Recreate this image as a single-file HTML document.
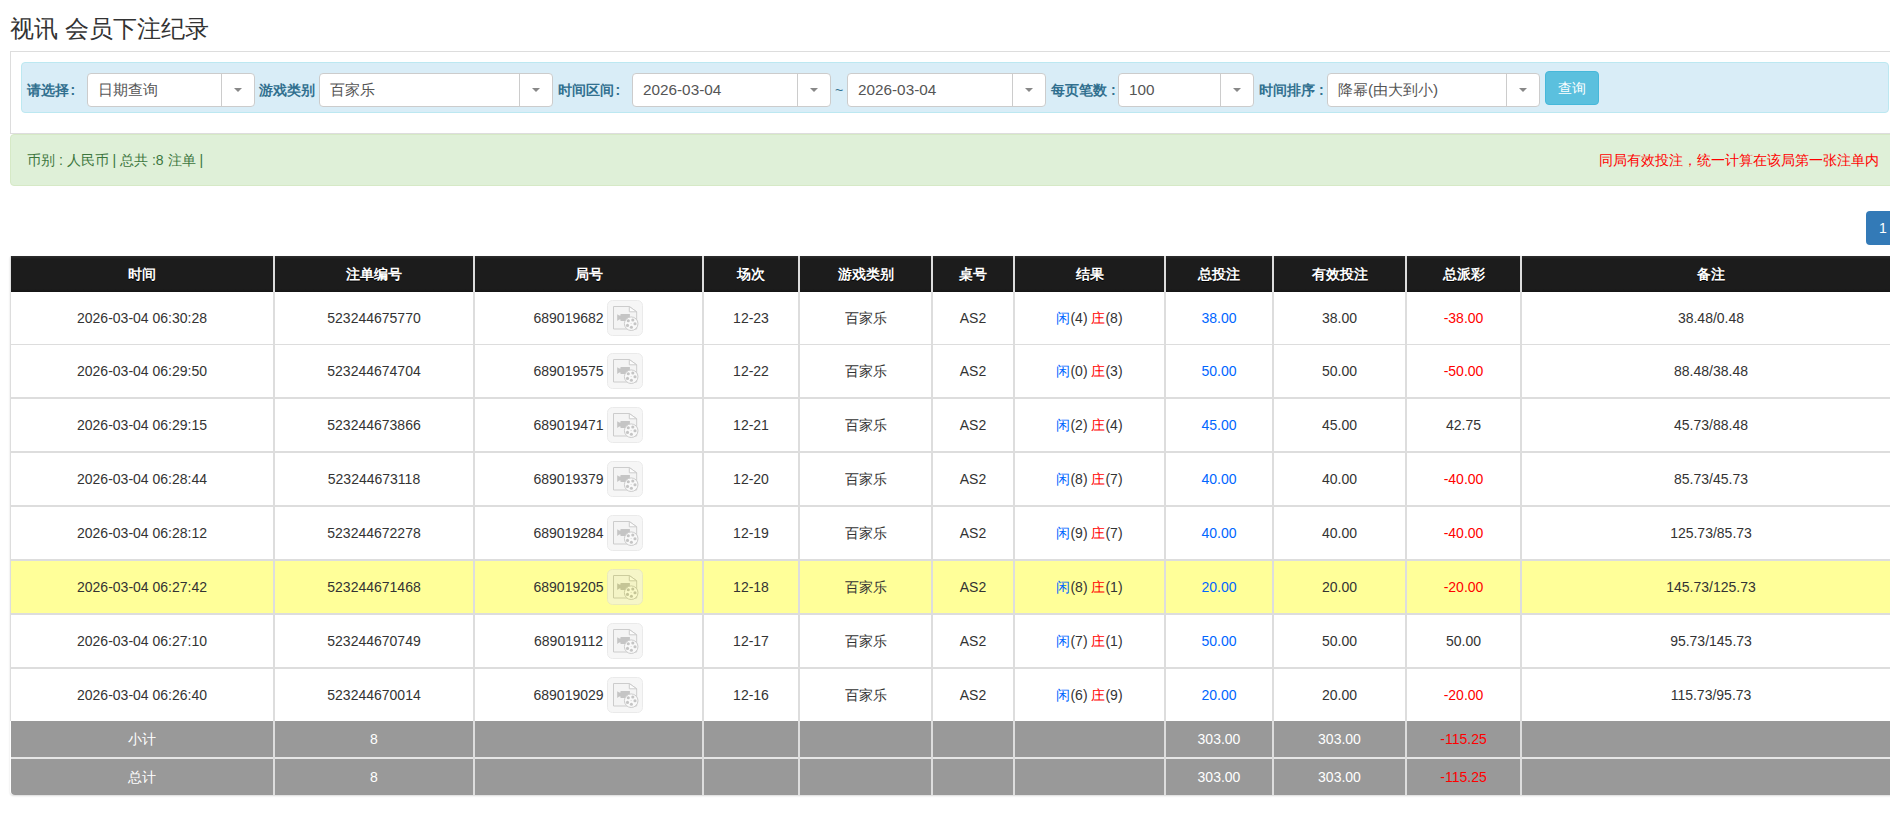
<!DOCTYPE html>
<html><head><meta charset="utf-8"><title>视讯 会员下注纪录</title>
<style>
*{box-sizing:border-box}
html,body{margin:0;padding:0;overflow:hidden;background:#fff;}
body{width:1890px;height:820px;position:relative;font-family:"Liberation Sans",sans-serif;font-size:14px;color:#333;}
.abs{position:absolute}
.title{position:absolute;left:10px;top:12px;font-size:24px;line-height:34px;color:#333;white-space:nowrap}
.outer{position:absolute;left:10px;top:51px;width:1890px;height:83px;border:1px solid #dddddd;border-right:none;background:#fff}
.info{position:absolute;left:21px;top:62px;width:1868px;height:51px;border:1px solid #bce8f1;background:#d9edf7;border-radius:4px}
.lbl{position:absolute;top:80px;height:20px;line-height:20px;font-size:14px;font-weight:bold;color:#31708f;white-space:nowrap}
.sel{position:absolute;top:73px;height:34px;border:1px solid #cccccc;border-radius:4px;background:#fff}
.st{position:absolute;left:10px;top:6px;line-height:20px;font-size:15.3px;color:#555;white-space:nowrap}
.dv{position:absolute;right:32px;top:0;width:1px;height:32px;background:#cccccc}
.ar{position:absolute;right:12px;top:14px;width:0;height:0;border-left:4px solid transparent;border-right:4px solid transparent;border-top:4px solid #888}
.btn{position:absolute;left:1545px;top:71px;width:54px;height:34px;border:1px solid #46b8da;background:#5bc0de;border-radius:4px;color:#fff;text-align:center;line-height:32px;font-size:14px}
.succ{position:absolute;left:10px;top:134px;width:1900px;height:52px;border:1px solid #d6e9c6;background:#dff0d8;border-radius:4px}
.succ .l{position:absolute;left:16px;top:15px;line-height:20px;color:#3c763d;white-space:nowrap}
.succ .r{position:absolute;left:1588px;top:15px;line-height:20px;color:#ff0000;white-space:nowrap}
.page1{position:absolute;left:1866px;top:211px;width:60px;height:34px;background:#337ab7;border-radius:4px 0 0 4px;color:#fff;line-height:34px;font-size:14px}
.page1 span{position:absolute;left:13px;top:0}
.hdr{position:absolute;background:linear-gradient(#2e2e2e 0px,#1c1c1c 3px,#1c1c1c 33px,#141414 36px)}
.c{position:absolute;text-align:center;white-space:nowrap;font-size:14px}
.ib{display:inline-block;width:36px;height:36px;vertical-align:middle;position:relative;top:-1px}
.ib svg{display:block}
.shadow{position:absolute;left:10px;top:256px;width:1890px;height:539px;border-radius:0 0 4px 4px;box-shadow:0 1px 2px rgba(0,0,0,0.15)}
</style></head><body>
<div class="title">视讯 会员下注纪录</div>
<div class="outer"></div>
<div class="info"></div>
<div class="lbl" style="left:27px">请选择<span style="margin-left:1.5px">:</span></div>
<div class="sel" style="left:87px;width:168px"><span class="st">日期查询</span><div class="dv"></div><div class="ar"></div></div>
<div class="lbl" style="left:259px">游戏类别</div>
<div class="sel" style="left:319px;width:234px"><span class="st">百家乐</span><div class="dv"></div><div class="ar"></div></div>
<div class="lbl" style="left:558px">时间区间<span style="margin-left:1.5px">:</span></div>
<div class="sel" style="left:632px;width:199px"><span class="st">2026-03-04</span><div class="dv"></div><div class="ar"></div></div>
<div class="lbl" style="left:835px;font-weight:normal">~</div>
<div class="sel" style="left:847px;width:199px"><span class="st">2026-03-04</span><div class="dv"></div><div class="ar"></div></div>
<div class="lbl" style="left:1051px">每页笔数 :</div>
<div class="sel" style="left:1118px;width:136px"><span class="st">100</span><div class="dv"></div><div class="ar"></div></div>
<div class="lbl" style="left:1259px">时间排序 :</div>
<div class="sel" style="left:1327px;width:213px"><span class="st">降幂(由大到小)</span><div class="dv"></div><div class="ar"></div></div>
<div class="btn">查询</div>
<div class="succ"><span class="l">币别 : 人民币 | 总共 :8 注单 |</span><span class="r">同局有效投注，统一计算在该局第一张注单内</span></div>
<div class="page1"><span>1</span></div>
<div class="shadow"></div>
<div class="hdr" style="left:11px;top:256px;width:1889px;height:36px"></div>
<div style="position:absolute;left:10px;top:256px;width:1px;height:36px;background:#e2e2e2"></div>
<div class="c" style="left:11px;width:262px;top:256px;height:36px;line-height:36px;color:#fff;font-weight:bold;text-shadow:0 1px 0 #000">时间</div>
<div class="c" style="left:275px;width:198px;top:256px;height:36px;line-height:36px;color:#fff;font-weight:bold;text-shadow:0 1px 0 #000">注单编号</div>
<div class="c" style="left:475px;width:227px;top:256px;height:36px;line-height:36px;color:#fff;font-weight:bold;text-shadow:0 1px 0 #000">局号</div>
<div class="c" style="left:704px;width:94px;top:256px;height:36px;line-height:36px;color:#fff;font-weight:bold;text-shadow:0 1px 0 #000">场次</div>
<div class="c" style="left:800px;width:131px;top:256px;height:36px;line-height:36px;color:#fff;font-weight:bold;text-shadow:0 1px 0 #000">游戏类别</div>
<div class="c" style="left:933px;width:80px;top:256px;height:36px;line-height:36px;color:#fff;font-weight:bold;text-shadow:0 1px 0 #000">桌号</div>
<div class="c" style="left:1015px;width:149px;top:256px;height:36px;line-height:36px;color:#fff;font-weight:bold;text-shadow:0 1px 0 #000">结果</div>
<div class="c" style="left:1166px;width:106px;top:256px;height:36px;line-height:36px;color:#fff;font-weight:bold;text-shadow:0 1px 0 #000">总投注</div>
<div class="c" style="left:1274px;width:131px;top:256px;height:36px;line-height:36px;color:#fff;font-weight:bold;text-shadow:0 1px 0 #000">有效投注</div>
<div class="c" style="left:1407px;width:113px;top:256px;height:36px;line-height:36px;color:#fff;font-weight:bold;text-shadow:0 1px 0 #000">总派彩</div>
<div class="c" style="left:1522px;width:378px;top:256px;height:36px;line-height:36px;color:#fff;font-weight:bold;text-shadow:0 1px 0 #000">备注</div>
<div style="position:absolute;left:11px;top:292px;width:1889px;height:52px;background:#fff"></div>
<div class="c" style="left:11px;width:262px;top:292px;height:52px;line-height:52px;">2026-03-04 06:30:28</div>
<div class="c" style="left:275px;width:198px;top:292px;height:52px;line-height:52px;">523244675770</div>
<div class="c" style="left:475px;width:227px;top:292px;height:52px;line-height:52px;">689019682 <span class="ib"><svg width="36" height="36" viewBox="0 0 36 36" style="opacity:0.54"><rect x="0.5" y="0.5" width="35" height="35" rx="5" ry="5" fill="#f0f0f0" stroke="#dadada"/>
<path d="M6.5 6.5 H22.3 L29.7 11.8 V29 H6.5 Z" fill="#ececec" stroke="#a2a2a2" stroke-width="1"/>
<path d="M22.3 6.5 V11.8 H29.7 Z" fill="#fbfbfb" stroke="#a2a2a2" stroke-width="1" stroke-linejoin="round"/>
<path d="M10.2 14.2 L12.2 15.6 L13.5 15.6 V14.1 H22.9 V21.1 H13.5 V19.6 L12.2 19.6 L10.2 21.1 Z" fill="#959595"/>
<circle cx="24.2" cy="23.7" r="6.8" fill="#f4f4f4" stroke="#a2a2a2" stroke-width="1"/>
<circle cx="21.3" cy="20.8" r="1.55" fill="#959595"/><circle cx="25.8" cy="20.0" r="1.55" fill="#959595"/>
<circle cx="28.0" cy="23.8" r="1.55" fill="#959595"/><circle cx="24.4" cy="27.2" r="1.55" fill="#959595"/>
<circle cx="20.5" cy="25.4" r="1.55" fill="#959595"/><circle cx="24.1" cy="23.5" r="0.6" fill="#b7b7b7"/>
</svg></span></div>
<div class="c" style="left:704px;width:94px;top:292px;height:52px;line-height:52px;">12-23</div>
<div class="c" style="left:800px;width:131px;top:292px;height:52px;line-height:52px;">百家乐</div>
<div class="c" style="left:933px;width:80px;top:292px;height:52px;line-height:52px;">AS2</div>
<div class="c" style="left:1015px;width:149px;top:292px;height:52px;line-height:52px;"><span style="color:#0066ff">闲</span>(4) <span style="color:#ff0000">庄</span>(8)</div>
<div class="c" style="left:1166px;width:106px;top:292px;height:52px;line-height:52px;"><span style="color:#0066ff">38.00</span></div>
<div class="c" style="left:1274px;width:131px;top:292px;height:52px;line-height:52px;">38.00</div>
<div class="c" style="left:1407px;width:113px;top:292px;height:52px;line-height:52px;"><span style="color:#ff0000">-38.00</span></div>
<div class="c" style="left:1522px;width:378px;top:292px;height:52px;line-height:52px;">38.48/0.48</div>
<div style="position:absolute;left:11px;top:345px;width:1889px;height:52px;background:#fff"></div>
<div class="c" style="left:11px;width:262px;top:345px;height:52px;line-height:52px;">2026-03-04 06:29:50</div>
<div class="c" style="left:275px;width:198px;top:345px;height:52px;line-height:52px;">523244674704</div>
<div class="c" style="left:475px;width:227px;top:345px;height:52px;line-height:52px;">689019575 <span class="ib"><svg width="36" height="36" viewBox="0 0 36 36" style="opacity:0.54"><rect x="0.5" y="0.5" width="35" height="35" rx="5" ry="5" fill="#f0f0f0" stroke="#dadada"/>
<path d="M6.5 6.5 H22.3 L29.7 11.8 V29 H6.5 Z" fill="#ececec" stroke="#a2a2a2" stroke-width="1"/>
<path d="M22.3 6.5 V11.8 H29.7 Z" fill="#fbfbfb" stroke="#a2a2a2" stroke-width="1" stroke-linejoin="round"/>
<path d="M10.2 14.2 L12.2 15.6 L13.5 15.6 V14.1 H22.9 V21.1 H13.5 V19.6 L12.2 19.6 L10.2 21.1 Z" fill="#959595"/>
<circle cx="24.2" cy="23.7" r="6.8" fill="#f4f4f4" stroke="#a2a2a2" stroke-width="1"/>
<circle cx="21.3" cy="20.8" r="1.55" fill="#959595"/><circle cx="25.8" cy="20.0" r="1.55" fill="#959595"/>
<circle cx="28.0" cy="23.8" r="1.55" fill="#959595"/><circle cx="24.4" cy="27.2" r="1.55" fill="#959595"/>
<circle cx="20.5" cy="25.4" r="1.55" fill="#959595"/><circle cx="24.1" cy="23.5" r="0.6" fill="#b7b7b7"/>
</svg></span></div>
<div class="c" style="left:704px;width:94px;top:345px;height:52px;line-height:52px;">12-22</div>
<div class="c" style="left:800px;width:131px;top:345px;height:52px;line-height:52px;">百家乐</div>
<div class="c" style="left:933px;width:80px;top:345px;height:52px;line-height:52px;">AS2</div>
<div class="c" style="left:1015px;width:149px;top:345px;height:52px;line-height:52px;"><span style="color:#0066ff">闲</span>(0) <span style="color:#ff0000">庄</span>(3)</div>
<div class="c" style="left:1166px;width:106px;top:345px;height:52px;line-height:52px;"><span style="color:#0066ff">50.00</span></div>
<div class="c" style="left:1274px;width:131px;top:345px;height:52px;line-height:52px;">50.00</div>
<div class="c" style="left:1407px;width:113px;top:345px;height:52px;line-height:52px;"><span style="color:#ff0000">-50.00</span></div>
<div class="c" style="left:1522px;width:378px;top:345px;height:52px;line-height:52px;">88.48/38.48</div>
<div style="position:absolute;left:11px;top:399px;width:1889px;height:52px;background:#fff"></div>
<div class="c" style="left:11px;width:262px;top:399px;height:52px;line-height:52px;">2026-03-04 06:29:15</div>
<div class="c" style="left:275px;width:198px;top:399px;height:52px;line-height:52px;">523244673866</div>
<div class="c" style="left:475px;width:227px;top:399px;height:52px;line-height:52px;">689019471 <span class="ib"><svg width="36" height="36" viewBox="0 0 36 36" style="opacity:0.54"><rect x="0.5" y="0.5" width="35" height="35" rx="5" ry="5" fill="#f0f0f0" stroke="#dadada"/>
<path d="M6.5 6.5 H22.3 L29.7 11.8 V29 H6.5 Z" fill="#ececec" stroke="#a2a2a2" stroke-width="1"/>
<path d="M22.3 6.5 V11.8 H29.7 Z" fill="#fbfbfb" stroke="#a2a2a2" stroke-width="1" stroke-linejoin="round"/>
<path d="M10.2 14.2 L12.2 15.6 L13.5 15.6 V14.1 H22.9 V21.1 H13.5 V19.6 L12.2 19.6 L10.2 21.1 Z" fill="#959595"/>
<circle cx="24.2" cy="23.7" r="6.8" fill="#f4f4f4" stroke="#a2a2a2" stroke-width="1"/>
<circle cx="21.3" cy="20.8" r="1.55" fill="#959595"/><circle cx="25.8" cy="20.0" r="1.55" fill="#959595"/>
<circle cx="28.0" cy="23.8" r="1.55" fill="#959595"/><circle cx="24.4" cy="27.2" r="1.55" fill="#959595"/>
<circle cx="20.5" cy="25.4" r="1.55" fill="#959595"/><circle cx="24.1" cy="23.5" r="0.6" fill="#b7b7b7"/>
</svg></span></div>
<div class="c" style="left:704px;width:94px;top:399px;height:52px;line-height:52px;">12-21</div>
<div class="c" style="left:800px;width:131px;top:399px;height:52px;line-height:52px;">百家乐</div>
<div class="c" style="left:933px;width:80px;top:399px;height:52px;line-height:52px;">AS2</div>
<div class="c" style="left:1015px;width:149px;top:399px;height:52px;line-height:52px;"><span style="color:#0066ff">闲</span>(2) <span style="color:#ff0000">庄</span>(4)</div>
<div class="c" style="left:1166px;width:106px;top:399px;height:52px;line-height:52px;"><span style="color:#0066ff">45.00</span></div>
<div class="c" style="left:1274px;width:131px;top:399px;height:52px;line-height:52px;">45.00</div>
<div class="c" style="left:1407px;width:113px;top:399px;height:52px;line-height:52px;">42.75</div>
<div class="c" style="left:1522px;width:378px;top:399px;height:52px;line-height:52px;">45.73/88.48</div>
<div style="position:absolute;left:11px;top:453px;width:1889px;height:52px;background:#fff"></div>
<div class="c" style="left:11px;width:262px;top:453px;height:52px;line-height:52px;">2026-03-04 06:28:44</div>
<div class="c" style="left:275px;width:198px;top:453px;height:52px;line-height:52px;">523244673118</div>
<div class="c" style="left:475px;width:227px;top:453px;height:52px;line-height:52px;">689019379 <span class="ib"><svg width="36" height="36" viewBox="0 0 36 36" style="opacity:0.54"><rect x="0.5" y="0.5" width="35" height="35" rx="5" ry="5" fill="#f0f0f0" stroke="#dadada"/>
<path d="M6.5 6.5 H22.3 L29.7 11.8 V29 H6.5 Z" fill="#ececec" stroke="#a2a2a2" stroke-width="1"/>
<path d="M22.3 6.5 V11.8 H29.7 Z" fill="#fbfbfb" stroke="#a2a2a2" stroke-width="1" stroke-linejoin="round"/>
<path d="M10.2 14.2 L12.2 15.6 L13.5 15.6 V14.1 H22.9 V21.1 H13.5 V19.6 L12.2 19.6 L10.2 21.1 Z" fill="#959595"/>
<circle cx="24.2" cy="23.7" r="6.8" fill="#f4f4f4" stroke="#a2a2a2" stroke-width="1"/>
<circle cx="21.3" cy="20.8" r="1.55" fill="#959595"/><circle cx="25.8" cy="20.0" r="1.55" fill="#959595"/>
<circle cx="28.0" cy="23.8" r="1.55" fill="#959595"/><circle cx="24.4" cy="27.2" r="1.55" fill="#959595"/>
<circle cx="20.5" cy="25.4" r="1.55" fill="#959595"/><circle cx="24.1" cy="23.5" r="0.6" fill="#b7b7b7"/>
</svg></span></div>
<div class="c" style="left:704px;width:94px;top:453px;height:52px;line-height:52px;">12-20</div>
<div class="c" style="left:800px;width:131px;top:453px;height:52px;line-height:52px;">百家乐</div>
<div class="c" style="left:933px;width:80px;top:453px;height:52px;line-height:52px;">AS2</div>
<div class="c" style="left:1015px;width:149px;top:453px;height:52px;line-height:52px;"><span style="color:#0066ff">闲</span>(8) <span style="color:#ff0000">庄</span>(7)</div>
<div class="c" style="left:1166px;width:106px;top:453px;height:52px;line-height:52px;"><span style="color:#0066ff">40.00</span></div>
<div class="c" style="left:1274px;width:131px;top:453px;height:52px;line-height:52px;">40.00</div>
<div class="c" style="left:1407px;width:113px;top:453px;height:52px;line-height:52px;"><span style="color:#ff0000">-40.00</span></div>
<div class="c" style="left:1522px;width:378px;top:453px;height:52px;line-height:52px;">85.73/45.73</div>
<div style="position:absolute;left:11px;top:507px;width:1889px;height:52px;background:#fff"></div>
<div class="c" style="left:11px;width:262px;top:507px;height:52px;line-height:52px;">2026-03-04 06:28:12</div>
<div class="c" style="left:275px;width:198px;top:507px;height:52px;line-height:52px;">523244672278</div>
<div class="c" style="left:475px;width:227px;top:507px;height:52px;line-height:52px;">689019284 <span class="ib"><svg width="36" height="36" viewBox="0 0 36 36" style="opacity:0.54"><rect x="0.5" y="0.5" width="35" height="35" rx="5" ry="5" fill="#f0f0f0" stroke="#dadada"/>
<path d="M6.5 6.5 H22.3 L29.7 11.8 V29 H6.5 Z" fill="#ececec" stroke="#a2a2a2" stroke-width="1"/>
<path d="M22.3 6.5 V11.8 H29.7 Z" fill="#fbfbfb" stroke="#a2a2a2" stroke-width="1" stroke-linejoin="round"/>
<path d="M10.2 14.2 L12.2 15.6 L13.5 15.6 V14.1 H22.9 V21.1 H13.5 V19.6 L12.2 19.6 L10.2 21.1 Z" fill="#959595"/>
<circle cx="24.2" cy="23.7" r="6.8" fill="#f4f4f4" stroke="#a2a2a2" stroke-width="1"/>
<circle cx="21.3" cy="20.8" r="1.55" fill="#959595"/><circle cx="25.8" cy="20.0" r="1.55" fill="#959595"/>
<circle cx="28.0" cy="23.8" r="1.55" fill="#959595"/><circle cx="24.4" cy="27.2" r="1.55" fill="#959595"/>
<circle cx="20.5" cy="25.4" r="1.55" fill="#959595"/><circle cx="24.1" cy="23.5" r="0.6" fill="#b7b7b7"/>
</svg></span></div>
<div class="c" style="left:704px;width:94px;top:507px;height:52px;line-height:52px;">12-19</div>
<div class="c" style="left:800px;width:131px;top:507px;height:52px;line-height:52px;">百家乐</div>
<div class="c" style="left:933px;width:80px;top:507px;height:52px;line-height:52px;">AS2</div>
<div class="c" style="left:1015px;width:149px;top:507px;height:52px;line-height:52px;"><span style="color:#0066ff">闲</span>(9) <span style="color:#ff0000">庄</span>(7)</div>
<div class="c" style="left:1166px;width:106px;top:507px;height:52px;line-height:52px;"><span style="color:#0066ff">40.00</span></div>
<div class="c" style="left:1274px;width:131px;top:507px;height:52px;line-height:52px;">40.00</div>
<div class="c" style="left:1407px;width:113px;top:507px;height:52px;line-height:52px;"><span style="color:#ff0000">-40.00</span></div>
<div class="c" style="left:1522px;width:378px;top:507px;height:52px;line-height:52px;">125.73/85.73</div>
<div style="position:absolute;left:11px;top:561px;width:1889px;height:52px;background:#ffff99"></div>
<div class="c" style="left:11px;width:262px;top:561px;height:52px;line-height:52px;">2026-03-04 06:27:42</div>
<div class="c" style="left:275px;width:198px;top:561px;height:52px;line-height:52px;">523244671468</div>
<div class="c" style="left:475px;width:227px;top:561px;height:52px;line-height:52px;">689019205 <span class="ib"><svg width="36" height="36" viewBox="0 0 36 36" style="opacity:0.54"><rect x="0.5" y="0.5" width="35" height="35" rx="5" ry="5" fill="#f0f0f0" stroke="#dadada"/>
<path d="M6.5 6.5 H22.3 L29.7 11.8 V29 H6.5 Z" fill="#ececec" stroke="#a2a2a2" stroke-width="1"/>
<path d="M22.3 6.5 V11.8 H29.7 Z" fill="#fbfbfb" stroke="#a2a2a2" stroke-width="1" stroke-linejoin="round"/>
<path d="M10.2 14.2 L12.2 15.6 L13.5 15.6 V14.1 H22.9 V21.1 H13.5 V19.6 L12.2 19.6 L10.2 21.1 Z" fill="#959595"/>
<circle cx="24.2" cy="23.7" r="6.8" fill="#f4f4f4" stroke="#a2a2a2" stroke-width="1"/>
<circle cx="21.3" cy="20.8" r="1.55" fill="#959595"/><circle cx="25.8" cy="20.0" r="1.55" fill="#959595"/>
<circle cx="28.0" cy="23.8" r="1.55" fill="#959595"/><circle cx="24.4" cy="27.2" r="1.55" fill="#959595"/>
<circle cx="20.5" cy="25.4" r="1.55" fill="#959595"/><circle cx="24.1" cy="23.5" r="0.6" fill="#b7b7b7"/>
</svg></span></div>
<div class="c" style="left:704px;width:94px;top:561px;height:52px;line-height:52px;">12-18</div>
<div class="c" style="left:800px;width:131px;top:561px;height:52px;line-height:52px;">百家乐</div>
<div class="c" style="left:933px;width:80px;top:561px;height:52px;line-height:52px;">AS2</div>
<div class="c" style="left:1015px;width:149px;top:561px;height:52px;line-height:52px;"><span style="color:#0066ff">闲</span>(8) <span style="color:#ff0000">庄</span>(1)</div>
<div class="c" style="left:1166px;width:106px;top:561px;height:52px;line-height:52px;"><span style="color:#0066ff">20.00</span></div>
<div class="c" style="left:1274px;width:131px;top:561px;height:52px;line-height:52px;">20.00</div>
<div class="c" style="left:1407px;width:113px;top:561px;height:52px;line-height:52px;"><span style="color:#ff0000">-20.00</span></div>
<div class="c" style="left:1522px;width:378px;top:561px;height:52px;line-height:52px;">145.73/125.73</div>
<div style="position:absolute;left:11px;top:615px;width:1889px;height:52px;background:#fff"></div>
<div class="c" style="left:11px;width:262px;top:615px;height:52px;line-height:52px;">2026-03-04 06:27:10</div>
<div class="c" style="left:275px;width:198px;top:615px;height:52px;line-height:52px;">523244670749</div>
<div class="c" style="left:475px;width:227px;top:615px;height:52px;line-height:52px;">689019112 <span class="ib"><svg width="36" height="36" viewBox="0 0 36 36" style="opacity:0.54"><rect x="0.5" y="0.5" width="35" height="35" rx="5" ry="5" fill="#f0f0f0" stroke="#dadada"/>
<path d="M6.5 6.5 H22.3 L29.7 11.8 V29 H6.5 Z" fill="#ececec" stroke="#a2a2a2" stroke-width="1"/>
<path d="M22.3 6.5 V11.8 H29.7 Z" fill="#fbfbfb" stroke="#a2a2a2" stroke-width="1" stroke-linejoin="round"/>
<path d="M10.2 14.2 L12.2 15.6 L13.5 15.6 V14.1 H22.9 V21.1 H13.5 V19.6 L12.2 19.6 L10.2 21.1 Z" fill="#959595"/>
<circle cx="24.2" cy="23.7" r="6.8" fill="#f4f4f4" stroke="#a2a2a2" stroke-width="1"/>
<circle cx="21.3" cy="20.8" r="1.55" fill="#959595"/><circle cx="25.8" cy="20.0" r="1.55" fill="#959595"/>
<circle cx="28.0" cy="23.8" r="1.55" fill="#959595"/><circle cx="24.4" cy="27.2" r="1.55" fill="#959595"/>
<circle cx="20.5" cy="25.4" r="1.55" fill="#959595"/><circle cx="24.1" cy="23.5" r="0.6" fill="#b7b7b7"/>
</svg></span></div>
<div class="c" style="left:704px;width:94px;top:615px;height:52px;line-height:52px;">12-17</div>
<div class="c" style="left:800px;width:131px;top:615px;height:52px;line-height:52px;">百家乐</div>
<div class="c" style="left:933px;width:80px;top:615px;height:52px;line-height:52px;">AS2</div>
<div class="c" style="left:1015px;width:149px;top:615px;height:52px;line-height:52px;"><span style="color:#0066ff">闲</span>(7) <span style="color:#ff0000">庄</span>(1)</div>
<div class="c" style="left:1166px;width:106px;top:615px;height:52px;line-height:52px;"><span style="color:#0066ff">50.00</span></div>
<div class="c" style="left:1274px;width:131px;top:615px;height:52px;line-height:52px;">50.00</div>
<div class="c" style="left:1407px;width:113px;top:615px;height:52px;line-height:52px;">50.00</div>
<div class="c" style="left:1522px;width:378px;top:615px;height:52px;line-height:52px;">95.73/145.73</div>
<div style="position:absolute;left:11px;top:669px;width:1889px;height:52px;background:#fff"></div>
<div class="c" style="left:11px;width:262px;top:669px;height:52px;line-height:52px;">2026-03-04 06:26:40</div>
<div class="c" style="left:275px;width:198px;top:669px;height:52px;line-height:52px;">523244670014</div>
<div class="c" style="left:475px;width:227px;top:669px;height:52px;line-height:52px;">689019029 <span class="ib"><svg width="36" height="36" viewBox="0 0 36 36" style="opacity:0.54"><rect x="0.5" y="0.5" width="35" height="35" rx="5" ry="5" fill="#f0f0f0" stroke="#dadada"/>
<path d="M6.5 6.5 H22.3 L29.7 11.8 V29 H6.5 Z" fill="#ececec" stroke="#a2a2a2" stroke-width="1"/>
<path d="M22.3 6.5 V11.8 H29.7 Z" fill="#fbfbfb" stroke="#a2a2a2" stroke-width="1" stroke-linejoin="round"/>
<path d="M10.2 14.2 L12.2 15.6 L13.5 15.6 V14.1 H22.9 V21.1 H13.5 V19.6 L12.2 19.6 L10.2 21.1 Z" fill="#959595"/>
<circle cx="24.2" cy="23.7" r="6.8" fill="#f4f4f4" stroke="#a2a2a2" stroke-width="1"/>
<circle cx="21.3" cy="20.8" r="1.55" fill="#959595"/><circle cx="25.8" cy="20.0" r="1.55" fill="#959595"/>
<circle cx="28.0" cy="23.8" r="1.55" fill="#959595"/><circle cx="24.4" cy="27.2" r="1.55" fill="#959595"/>
<circle cx="20.5" cy="25.4" r="1.55" fill="#959595"/><circle cx="24.1" cy="23.5" r="0.6" fill="#b7b7b7"/>
</svg></span></div>
<div class="c" style="left:704px;width:94px;top:669px;height:52px;line-height:52px;">12-16</div>
<div class="c" style="left:800px;width:131px;top:669px;height:52px;line-height:52px;">百家乐</div>
<div class="c" style="left:933px;width:80px;top:669px;height:52px;line-height:52px;">AS2</div>
<div class="c" style="left:1015px;width:149px;top:669px;height:52px;line-height:52px;"><span style="color:#0066ff">闲</span>(6) <span style="color:#ff0000">庄</span>(9)</div>
<div class="c" style="left:1166px;width:106px;top:669px;height:52px;line-height:52px;"><span style="color:#0066ff">20.00</span></div>
<div class="c" style="left:1274px;width:131px;top:669px;height:52px;line-height:52px;">20.00</div>
<div class="c" style="left:1407px;width:113px;top:669px;height:52px;line-height:52px;"><span style="color:#ff0000">-20.00</span></div>
<div class="c" style="left:1522px;width:378px;top:669px;height:52px;line-height:52px;">115.73/95.73</div>
<div style="position:absolute;left:10px;top:344px;width:1890px;height:1px;background:#dddddd"></div>
<div style="position:absolute;left:10px;top:397px;width:1890px;height:2px;background:#dddddd"></div>
<div style="position:absolute;left:10px;top:451px;width:1890px;height:2px;background:#dddddd"></div>
<div style="position:absolute;left:10px;top:505px;width:1890px;height:2px;background:#dddddd"></div>
<div style="position:absolute;left:10px;top:559px;width:1890px;height:2px;background:#dddddd"></div>
<div style="position:absolute;left:10px;top:613px;width:1890px;height:2px;background:#dddddd"></div>
<div style="position:absolute;left:10px;top:667px;width:1890px;height:2px;background:#dddddd"></div>
<div style="position:absolute;left:11px;top:721px;width:1889px;height:36px;background:#999999;"></div>
<div class="c" style="left:11px;width:262px;top:721px;height:36px;line-height:36px;color:#fff">小计</div>
<div class="c" style="left:275px;width:198px;top:721px;height:36px;line-height:36px;color:#fff">8</div>
<div class="c" style="left:475px;width:227px;top:721px;height:36px;line-height:36px;color:#fff"></div>
<div class="c" style="left:704px;width:94px;top:721px;height:36px;line-height:36px;color:#fff"></div>
<div class="c" style="left:800px;width:131px;top:721px;height:36px;line-height:36px;color:#fff"></div>
<div class="c" style="left:933px;width:80px;top:721px;height:36px;line-height:36px;color:#fff"></div>
<div class="c" style="left:1015px;width:149px;top:721px;height:36px;line-height:36px;color:#fff"></div>
<div class="c" style="left:1166px;width:106px;top:721px;height:36px;line-height:36px;color:#fff">303.00</div>
<div class="c" style="left:1274px;width:131px;top:721px;height:36px;line-height:36px;color:#fff">303.00</div>
<div class="c" style="left:1407px;width:113px;top:721px;height:36px;line-height:36px;color:#fff"><span style="color:#ff0000">-115.25</span></div>
<div class="c" style="left:1522px;width:378px;top:721px;height:36px;line-height:36px;color:#fff"></div>
<div style="position:absolute;left:11px;top:759px;width:1889px;height:36px;background:#999999;border-radius:0 0 0 4px;"></div>
<div class="c" style="left:11px;width:262px;top:759px;height:36px;line-height:36px;color:#fff">总计</div>
<div class="c" style="left:275px;width:198px;top:759px;height:36px;line-height:36px;color:#fff">8</div>
<div class="c" style="left:475px;width:227px;top:759px;height:36px;line-height:36px;color:#fff"></div>
<div class="c" style="left:704px;width:94px;top:759px;height:36px;line-height:36px;color:#fff"></div>
<div class="c" style="left:800px;width:131px;top:759px;height:36px;line-height:36px;color:#fff"></div>
<div class="c" style="left:933px;width:80px;top:759px;height:36px;line-height:36px;color:#fff"></div>
<div class="c" style="left:1015px;width:149px;top:759px;height:36px;line-height:36px;color:#fff"></div>
<div class="c" style="left:1166px;width:106px;top:759px;height:36px;line-height:36px;color:#fff">303.00</div>
<div class="c" style="left:1274px;width:131px;top:759px;height:36px;line-height:36px;color:#fff">303.00</div>
<div class="c" style="left:1407px;width:113px;top:759px;height:36px;line-height:36px;color:#fff"><span style="color:#ff0000">-115.25</span></div>
<div class="c" style="left:1522px;width:378px;top:759px;height:36px;line-height:36px;color:#fff"></div>
<div style="position:absolute;left:11px;top:757px;width:1889px;height:2px;background:#e6e6e6"></div>
<div style="position:absolute;left:10px;top:292px;width:1px;height:429px;background:#dddddd"></div>
<div style="position:absolute;left:273px;top:256px;width:2px;height:539px;background:#dddddd"></div>
<div style="position:absolute;left:473px;top:256px;width:2px;height:539px;background:#dddddd"></div>
<div style="position:absolute;left:702px;top:256px;width:2px;height:539px;background:#dddddd"></div>
<div style="position:absolute;left:798px;top:256px;width:2px;height:539px;background:#dddddd"></div>
<div style="position:absolute;left:931px;top:256px;width:2px;height:539px;background:#dddddd"></div>
<div style="position:absolute;left:1013px;top:256px;width:2px;height:539px;background:#dddddd"></div>
<div style="position:absolute;left:1164px;top:256px;width:2px;height:539px;background:#dddddd"></div>
<div style="position:absolute;left:1272px;top:256px;width:2px;height:539px;background:#dddddd"></div>
<div style="position:absolute;left:1405px;top:256px;width:2px;height:539px;background:#dddddd"></div>
<div style="position:absolute;left:1520px;top:256px;width:2px;height:539px;background:#dddddd"></div>
</body></html>
